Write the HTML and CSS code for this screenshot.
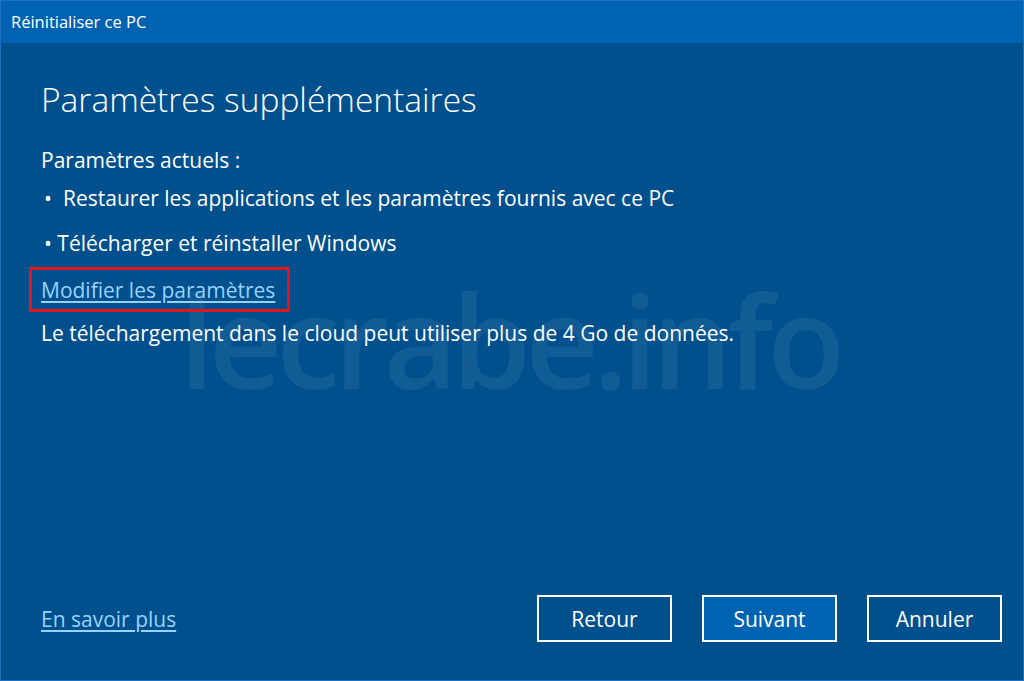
FILE: index.html
```html
<!DOCTYPE html>
<html lang="fr">
<head>
    <meta charset="UTF-8">
    <meta name="viewport" content="width=device-width, initial-scale=1.0">
    <title>Réinitialiser ce PC</title>
    <link rel="stylesheet" href="styles.css">
</head>
<body>
    <div class="window">
        <div class="titlebar">Réinitialiser ce PC</div>

        <div class="content">
            <div class="watermark">lecrabe.info</div>

            <h1>Paramètres supplémentaires</h1>
            <p class="line current">Paramètres actuels :</p>
            <p class="line item-first"><span class="bullet">•</span>Restaurer les applications et les paramètres fournis avec ce PC</p>
            <p class="line item-second">• Télécharger et réinstaller Windows</p>
            <div class="highlight">
                <a href="#" class="link">Modifier les paramètres</a>
            </div>
            <p class="line note">Le téléchargement dans le cloud peut utiliser plus de 4 Go de données.</p>
        </div>

        <!-- bas de la fenêtre -->
        <div class="footer">
            <a href="#" class="link">En savoir plus</a>
            <div class="buttons">
                <button class="btn">Retour</button>
                <button class="btn primary">Suivant</button>
                <button class="btn">Annuler</button>
            </div>
        </div>
    </div>
</body>
</html>
```

FILE: styles.css
```css
html, body {
    margin: 0;
    padding: 0;
}
body {
    font-family: "Open Sans", "Noto Sans", sans-serif;
    color: white;
    background: #00508e;
}
.window {
    height: 681px;
    box-sizing: border-box;
    border: 1px solid #1d6fbf;
    display: flex;
    flex-direction: column;
    background: #00508e;
}
.titlebar {
    height: 42px;
    line-height: 42px;
    padding-left: 10px;
    font-size: 16.5px;
    background: #0063b1;
}
.content {
    flex: 1;
    position: relative;
    padding: 34px 40px 0;
}
.watermark {
    position: absolute;
    left: 178px;
    top: 209px;
    font-size: 128px;
    font-weight: 600;
    letter-spacing: -6px;
    color: rgba(255, 255, 255, 0.07);
    pointer-events: none;
    white-space: nowrap;
}
h1 {
    margin: 0;
    font-size: 33.5px;
    line-height: 44px;
    font-weight: 300;
}
.line {
    position: relative;
    margin: 0;
    font-size: 21px;
    line-height: 28px;
}
.current {
    margin-top: 25px;
}
.item-first {
    margin-top: 10px;
}
.bullet {
    display: inline-block;
    width: 22px;
    padding-left: 3px;
    box-sizing: border-box;
}
.item-second {
    margin-top: 17px;
    padding-left: 3px;
}
.highlight {
    position: relative;
    display: inline-block;
    margin: 10px 0 0 -12px;
    padding: 6px 12px 5px 9px;
    border: 3px solid #e8141c;
    font-size: 21px;
    line-height: 28px;
}
.note {
    margin-top: 7px;
}
.link {
    color: #99d1ff;
    text-decoration: underline;
    text-underline-offset: 3px;
}
.footer {
    display: flex;
    justify-content: space-between;
    align-items: center;
    padding: 0 21px 38px 40px;
    font-size: 21px;
}
.buttons {
    display: flex;
    gap: 30px;
}
.btn {
    width: 135px;
    height: 47px;
    border: 2px solid white;
    background: transparent;
    color: white;
    font-family: "Open Sans", "Noto Sans", sans-serif;
    font-size: 21px;
    padding: 0;
}
.btn.primary {
    background: #0063b1;
}
```
